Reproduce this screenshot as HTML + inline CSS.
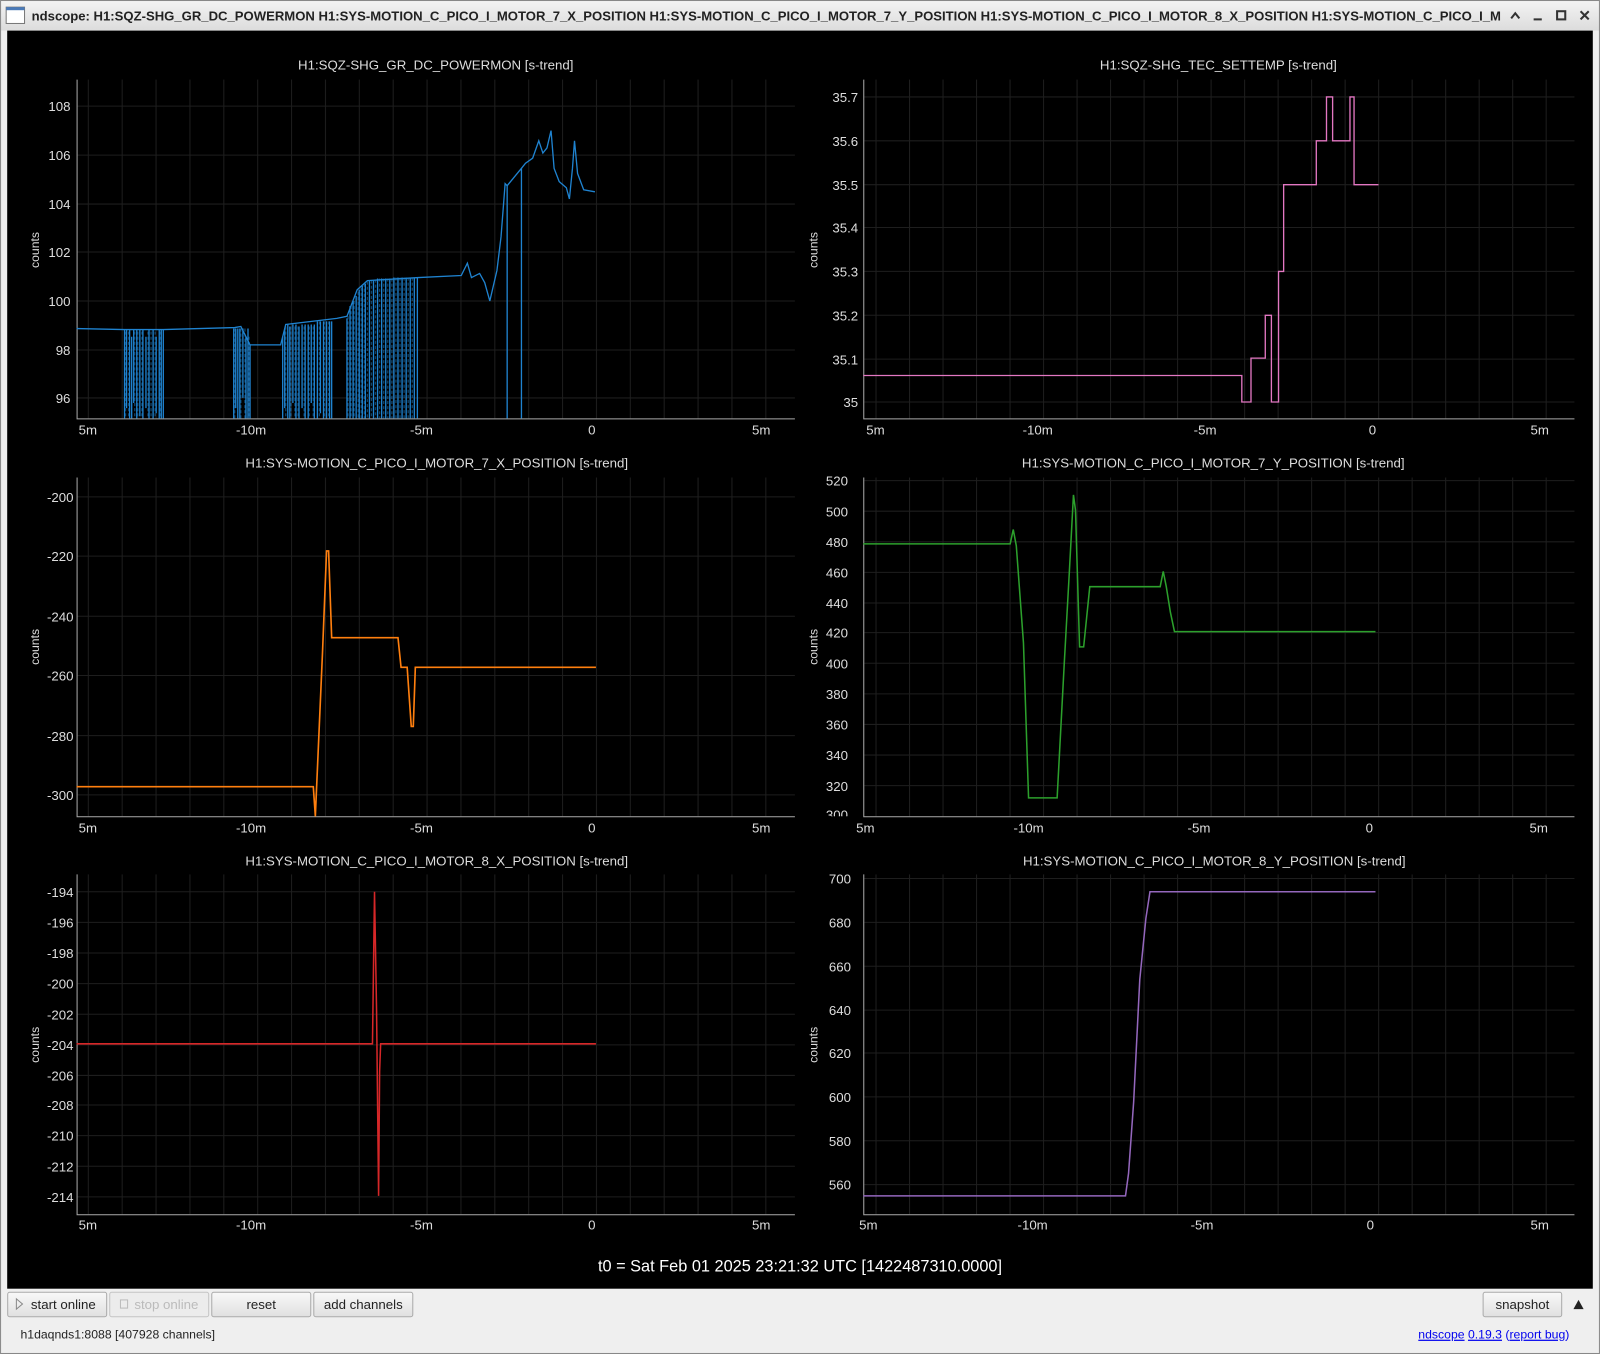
<!DOCTYPE html>
<html><head><meta charset="utf-8"><style>
html,body{margin:0;padding:0;background:#efefef;overflow:hidden}
svg{display:block}
text{font-family:"Liberation Sans",sans-serif}
</style></head><body>
<svg width="1600" height="1354" viewBox="0 0 1568 1327" xmlns="http://www.w3.org/2000/svg">
<defs>
<linearGradient id="tb" x1="0" y1="0" x2="0" y2="1"><stop offset="0" stop-color="#f4f4f4"/><stop offset="1" stop-color="#dcdcdc"/></linearGradient>
<linearGradient id="bt" x1="0" y1="0" x2="0" y2="1"><stop offset="0" stop-color="#f8f8f8"/><stop offset="1" stop-color="#e0e0e0"/></linearGradient>
<pattern id="gl" patternUnits="userSpaceOnUse" x="86" y="0" width="33.2" height="10"><rect x="0" y="0" width="1" height="10" fill="#1e1e1e"/></pattern>
<pattern id="gr" patternUnits="userSpaceOnUse" x="858" y="0" width="32.84" height="10"><rect x="0" y="0" width="1" height="10" fill="#1e1e1e"/></pattern>
</defs>
<rect x="0" y="0" width="1568" height="1327" fill="#efefef"/>
<rect x="0" y="0" width="1568" height="30" fill="url(#tb)"/>
<rect x="6" y="7" width="18" height="16" fill="#fff" stroke="#777"/>
<rect x="6" y="7" width="18" height="3" fill="#4a7ab8"/>
<text x="31" y="20" font-size="13" font-weight="bold" fill="#222" textLength="1440" lengthAdjust="spacingAndGlyphs">ndscope: H1:SQZ-SHG_GR_DC_POWERMON H1:SYS-MOTION_C_PICO_I_MOTOR_7_X_POSITION H1:SYS-MOTION_C_PICO_I_MOTOR_7_Y_POSITION H1:SYS-MOTION_C_PICO_I_MOTOR_8_X_POSITION H1:SYS-MOTION_C_PICO_I_M</text>
<path d="M1481 18 L1485 13 L1489 18" stroke="#333" stroke-width="2" fill="none"/>
<rect x="1503" y="18" width="8" height="2" fill="#333"/>
<rect x="1526" y="11" width="8" height="8" fill="none" stroke="#333" stroke-width="2"/>
<path d="M1549 11 L1557 19 M1557 11 L1549 19" stroke="#333" stroke-width="2"/>
<rect x="7" y="30" width="1554" height="1233" fill="#000"/>

<g font-size="13" fill="#ddd">
<text x="427" y="68" text-anchor="middle">H1:SQZ-SHG_GR_DC_POWERMON [s-trend]</text>
<text x="1194" y="68" text-anchor="middle">H1:SQZ-SHG_TEC_SETTEMP [s-trend]</text>
<text x="428" y="458" text-anchor="middle">H1:SYS-MOTION_C_PICO_I_MOTOR_7_X_POSITION [s-trend]</text>
<text x="1189" y="458" text-anchor="middle">H1:SYS-MOTION_C_PICO_I_MOTOR_7_Y_POSITION [s-trend]</text>
<text x="428" y="848" text-anchor="middle">H1:SYS-MOTION_C_PICO_I_MOTOR_8_X_POSITION [s-trend]</text>
<text x="1190" y="848" text-anchor="middle">H1:SYS-MOTION_C_PICO_I_MOTOR_8_Y_POSITION [s-trend]</text>
<text transform="translate(38,245) rotate(-90)" text-anchor="middle" font-size="12">counts</text>
<text transform="translate(801,245) rotate(-90)" text-anchor="middle" font-size="12">counts</text>
<text transform="translate(38,634) rotate(-90)" text-anchor="middle" font-size="12">counts</text>
<text transform="translate(801,634) rotate(-90)" text-anchor="middle" font-size="12">counts</text>
<text transform="translate(38,1024) rotate(-90)" text-anchor="middle" font-size="12">counts</text>
<text transform="translate(801,1024) rotate(-90)" text-anchor="middle" font-size="12">counts</text>
</g>

<g>
<rect x="76" y="78" width="703" height="332" fill="url(#gl)"/>
<rect x="847" y="78" width="696" height="332" fill="url(#gr)"/>
<rect x="76" y="468" width="703" height="332" fill="url(#gl)"/>
<rect x="847" y="468" width="696" height="332" fill="url(#gr)"/>
<rect x="76" y="857" width="703" height="333" fill="url(#gl)"/>
<rect x="847" y="857" width="696" height="333" fill="url(#gr)"/>
</g>
<g stroke="#1e1e1e" stroke-width="1">
<path d="M76 104H779M76 152H779M76 200H779M76 247H779M76 295H779M76 343H779M76 390H779"/>
<path d="M847 95H1543M847 138H1543M847 181H1543M847 223H1543M847 266H1543M847 309H1543M847 352H1543M847 394H1543"/>
<path d="M76 487H779M76 545H779M76 604H779M76 662H779M76 721H779M76 779H779"/>
<path d="M847 471H1543M847 501H1543M847 531H1543M847 561H1543M847 591H1543M847 620H1543M847 650H1543M847 680H1543M847 710H1543M847 740H1543M847 770H1543"/>
<path d="M76 874H779M76 904H779M76 934H779M76 964H779M76 994H779M76 1024H779M76 1054H779M76 1083H779M76 1113H779M76 1143H779M76 1173H779"/>
<path d="M847 861H1543M847 904H1543M847 947H1543M847 990H1543M847 1032H1543M847 1075H1543M847 1118H1543M847 1161H1543"/>
</g>
<g stroke="#aaa" stroke-width="1" fill="none">
<path d="M75.5 78V410.5H779"/><path d="M846.5 78V410.5H1543"/>
<path d="M75.5 468V800.5H779"/><path d="M846.5 468V800.5H1543"/>
<path d="M75.5 857V1190.5H779"/><path d="M846.5 857V1190.5H1543"/>
</g>

<g font-size="13" fill="#ddd" text-anchor="end">
<text x="69" y="109">108</text><text x="69" y="157">106</text><text x="69" y="205">104</text><text x="69" y="252">102</text><text x="69" y="300">100</text><text x="69" y="348">98</text><text x="69" y="395">96</text>
<text x="841" y="100">35.7</text><text x="841" y="143">35.6</text><text x="841" y="186">35.5</text><text x="841" y="228">35.4</text><text x="841" y="271">35.3</text><text x="841" y="314">35.2</text><text x="841" y="357">35.1</text><text x="841" y="399">35</text>
<text x="72" y="492">-200</text><text x="72" y="550">-220</text><text x="72" y="609">-240</text><text x="72" y="667">-260</text><text x="72" y="726">-280</text><text x="72" y="784">-300</text>
<text x="831" y="476">520</text><text x="831" y="506">500</text><text x="831" y="536">480</text><text x="831" y="566">460</text><text x="831" y="596">440</text><text x="831" y="625">420</text><text x="831" y="655">400</text><text x="831" y="685">380</text><text x="831" y="715">360</text><text x="831" y="745">340</text><text x="831" y="775">320</text><text x="831" y="803">300</text>
<text x="72" y="879">-194</text><text x="72" y="909">-196</text><text x="72" y="939">-198</text><text x="72" y="969">-200</text><text x="72" y="999">-202</text><text x="72" y="1029">-204</text><text x="72" y="1059">-206</text><text x="72" y="1088">-208</text><text x="72" y="1118">-210</text><text x="72" y="1148">-212</text><text x="72" y="1178">-214</text>
<text x="834" y="866">700</text><text x="834" y="909">680</text><text x="834" y="952">660</text><text x="834" y="995">640</text><text x="834" y="1037">620</text><text x="834" y="1080">600</text><text x="834" y="1123">580</text><text x="834" y="1166">560</text>
</g>
<rect x="800" y="800" width="40" height="10" fill="#000"/>
<g font-size="13" fill="#ddd" text-anchor="middle">
<text x="86" y="426">5m</text><text x="246" y="426">-10m</text><text x="413" y="426">-5m</text><text x="580" y="426">0</text><text x="746" y="426">5m</text>
<text x="858" y="426">5m</text><text x="1017" y="426">-10m</text><text x="1181" y="426">-5m</text><text x="1345" y="426">0</text><text x="1509" y="426">5m</text>
<text x="86" y="816">5m</text><text x="246" y="816">-10m</text><text x="413" y="816">-5m</text><text x="580" y="816">0</text><text x="746" y="816">5m</text>
<text x="848" y="816">5m</text><text x="1008" y="816">-10m</text><text x="1175" y="816">-5m</text><text x="1342" y="816">0</text><text x="1508" y="816">5m</text>
<text x="86" y="1205">5m</text><text x="246" y="1205">-10m</text><text x="413" y="1205">-5m</text><text x="580" y="1205">0</text><text x="746" y="1205">5m</text>
<text x="851" y="1205">5m</text><text x="1012" y="1205">-10m</text><text x="1178" y="1205">-5m</text><text x="1343" y="1205">0</text><text x="1509" y="1205">5m</text>
</g>

<g fill="none" stroke-width="1.3">
<path stroke="#1f83d0" stroke-opacity="0.5" stroke-dasharray="3 2" d="M123 325V410M126 325V410M132 325V410M135 325V410M139 325V410M145 325V410M148 325V410M152 325V410M157 325V410M230 322V410M236 322V410M240 322V410M244 330V410M280 320V410M285 320V410M289 320V410M292 320V410M298 320V410M303 320V410M307 320V410M313 315V410M318 315V410M322 315V410M341 310V410M344 300V410M347 295V410M351 286V410M354 282V410M357 278V410M360 276V410M364 275V410M368 274V410M372 273V410M376 273V410M380 273V410M384 273V410M388 272V410M392 272V410M396 272V410M400 272V410M404 272V410"/>
<path stroke="#1f83d0" d="M122 323V410M124 323V400M127 323V410M129 330V410M131 323V395M134 323V410M137 323V408M140 323V410M143 330V400M146 323V410M150 323V410M153 330V405M156 323V410M158 323V410M160 323V410M229 322V410M231 322V400M233 322V410M235 322V410M238 322V390M241 330V410M243 322V410M245 338V410M277 330V410M279 322V400M282 318V410M284 320V410M287 318V395M290 318V410M293 320V410M296 318V400M299 318V410M302 318V410M305 318V395M308 318V410M311 315V410M314 315V405M317 315V410M320 315V410M323 315V410M325 315V410M340 312V410M343 300V410M346 295V410M349 290V410M352 284V410M355 280V410M358 278V410M362 275V410M366 275V410M370 273V410M374 273V410M378 273V410M382 273V410M386 272V410M390 272V410M394 272V410M398 272V410M402 272V410M406 272V410M409 272V410M497 182V410M511 165V410"/>
<path stroke="#1f83d0" d="M75 322L122 323L160 323L230 321L236 320L245 338L275 338L280 318L330 312L340 310L350 284L360 275L410 272L452 270L458 258L462 272L470 268L475 277L480 295L487 265L491 232L495 180L497 182L511 165L515 160L522 155L528 138L532 150L536 145L540 128L543 165L548 178L555 184L558 195L561 165L563 138L566 170L572 186L583 188"/>
<path stroke="#e377c2" d="M846 368H1217V394H1226V351H1240V309H1246V394H1253V266H1258V181H1290V138H1300V95H1306V138H1323V95H1327V181H1351"/>
<path stroke="#ff7f0e" stroke-width="1.6" d="M75 771H307L309 800L316 640L320 540L322 540L325 625H390L393 654H399L403 712L405 712L407 654H584"/>
<path stroke="#2ca02c" stroke-width="1.5" d="M846 533H990L993 519L996 535L1003 630L1008 782H1036L1043 650L1048 560L1052 485L1054 500L1058 634H1062L1068 575H1137L1140 560L1143 575L1147 600L1151 619H1348"/>
<path stroke="#d62728" stroke-width="1.5" d="M75 1023H365L367 874L369 990L371 1172L372 1050L373 1023H584"/>
<path stroke="#9467bd" stroke-width="1.5" d="M846 1172H1103L1106 1150L1111 1080L1117 960L1123 900L1127 874H1348"/>
</g>

<text x="784" y="1246" text-anchor="middle" font-size="16" fill="#fff">t0 = Sat Feb 01 2025 23:21:32 UTC [1422487310.0000]</text>

<g font-size="13" text-anchor="middle">
<rect x="7.5" y="1266.5" width="97" height="24" rx="2" fill="url(#bt)" stroke="#aaa"/>
<path d="M16 1273L22 1278L16 1283Z" fill="none" stroke="#888"/>
<text x="62" y="1283" fill="#222">start online</text>
<rect x="107.5" y="1266.5" width="97" height="24" rx="2" fill="#ececec" stroke="#c4c4c4"/>
<rect x="118" y="1274" width="7" height="8" fill="none" stroke="#bbb"/>
<text x="163" y="1283" fill="#bbb">stop online</text>
<rect x="207.5" y="1266.5" width="97" height="24" rx="2" fill="url(#bt)" stroke="#aaa"/>
<text x="256" y="1283" fill="#222">reset</text>
<rect x="307.5" y="1266.5" width="97" height="24" rx="2" fill="url(#bt)" stroke="#aaa"/>
<text x="356" y="1283" fill="#222">add channels</text>
<rect x="1453.5" y="1266.5" width="77" height="24" rx="2" fill="url(#bt)" stroke="#aaa"/>
<text x="1492" y="1283" fill="#222">snapshot</text>
<path d="M1542 1283L1547 1274L1552 1283Z" fill="#222"/>
</g>
<text x="20" y="1312" font-size="12" fill="#222">h1daqnds1:8088  [407928 channels]</text>
<text x="1538" y="1312" font-size="12" fill="#00e" text-anchor="end"><tspan text-decoration="underline">ndscope</tspan> <tspan text-decoration="underline">0.19.3</tspan> (<tspan text-decoration="underline">report bug</tspan>)</text>
<rect x="0.5" y="0.5" width="1567" height="1326" fill="none" stroke="#888"/>
</svg>
</body></html>
